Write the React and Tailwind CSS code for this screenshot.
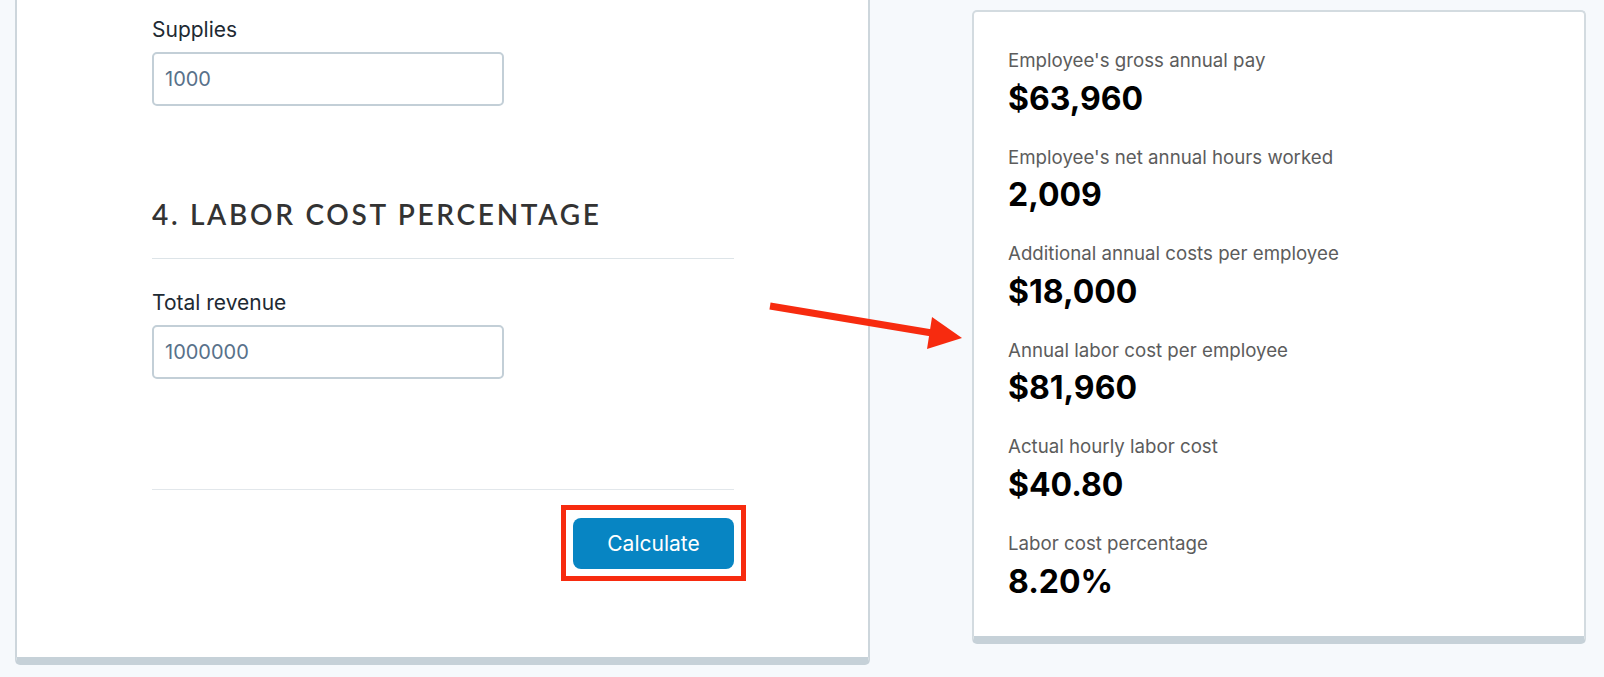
import React from "react";

const results = [
  ["Employee's gross annual pay", "$63,960"],
  ["Employee's net annual hours worked", "2,009"],
  ["Additional annual costs per employee", "$18,000"],
  ["Annual labor cost per employee", "$81,960"],
  ["Actual hourly labor cost", "$40.80"],
  ["Labor cost percentage", "8.20%"],
];

function Field({ label, value }) {
  return (
    <div className="flex flex-col">
      <label className="text-[21px] leading-[28px] text-[#1e2a33] mb-2">{label}</label>
      <div className="w-[352px] h-[54px] rounded-[5px] border-2 border-[#c3cfd7] bg-white flex items-center pl-[11px] text-[20px] text-[#58718a]">
        {value}
      </div>
    </div>
  );
}

export default function App() {
  return (
    <div className="relative w-[1604px] h-[677px] bg-[#f6f9fc] overflow-hidden flex items-start font-['Inter',sans-serif]">
      {/* Left card */}
      <div className="ml-[15px] w-[855px] bg-white border-x-2 border-b-8 border-x-[#cdd6dc] border-b-[#c6d1d8] rounded-b-[5px] pl-[135px] pt-[16px] pb-[76px]">
        <div className="w-[582px] flex flex-col">
          <Field label="Supplies" value="1000" />
          <h2 className="mt-[91px] font-['Lato',sans-serif] font-semibold text-[28px] leading-[34px] tracking-[2.7px] text-[#333333] whitespace-nowrap">
            4. LABOR COST PERCENTAGE
          </h2>
          <div className="mt-[27px] h-px bg-[#dde4e8]" />
          <div className="mt-[30px]">
            <Field label="Total revenue" value="1000000" />
          </div>
          <div className="mt-[110px] h-px bg-[#e2e7eb]" />
          <div className="mt-[15px] self-end -mr-[12px] border-[5px] border-[#f72b0f] px-[7px] pt-[8px] pb-[7px]">
            <button className="w-[161px] h-[51px] rounded-[8px] bg-[#0785c3] text-white text-[21px] flex items-center justify-center">
              Calculate
            </button>
          </div>
        </div>
      </div>

      {/* Right card */}
      <div className="ml-[102px] mt-[10px] w-[614px] bg-white border-x-2 border-t-2 border-b-8 border-x-[#d3dbe0] border-t-[#d3dbe0] border-b-[#c6d1d8] rounded-[5px] pl-[34px] pt-[36px] pb-[34px] flex flex-col gap-[26px]">
        {results.map(([label, value]) => (
          <div key={label} className="flex flex-col">
            <div className="text-[18.7px] leading-[26px] text-[#5c5c5c]">{label}</div>
            <div className="mt-[4.6px] text-[32px] leading-[40px] font-bold text-black">{value}</div>
          </div>
        ))}
      </div>

      {/* Annotation arrow */}
      <svg className="absolute left-[760px] top-[285px]" width="210" height="75" viewBox="0 0 210 75">
        <line x1="10" y1="21" x2="172" y2="48" stroke="#f72b0f" strokeWidth="7" />
        <polygon points="172,32 202,53 167,64" fill="#f72b0f" />
      </svg>
    </div>
  );
}
